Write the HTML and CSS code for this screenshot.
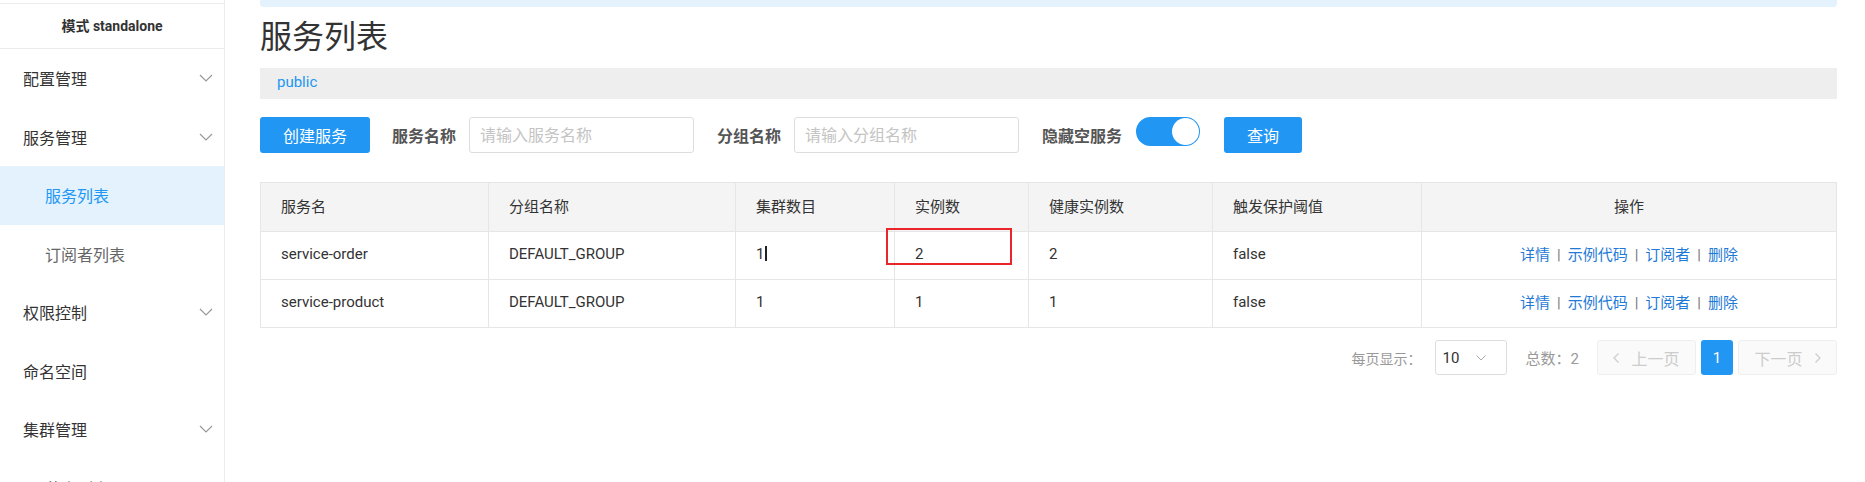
FILE: index.html
```html
<!DOCTYPE html>
<html lang="zh-CN">
<head>
<meta charset="utf-8">
<title>服务列表</title>
<link rel="stylesheet" href="styles.css">
</head>
<body>
<div class="app">
  <aside class="sidebar">
    <div class="side-head">模式 standalone</div>
    <ul class="menu">
      <li class="menu-item"><span>配置管理</span><svg class="chev" viewBox="0 0 14 8" width="14" height="8"><path d="M1 1l6 6 6-6" fill="none" stroke="#999" stroke-width="1.2"/></svg></li>
      <li class="menu-item"><span>服务管理</span><svg class="chev" viewBox="0 0 14 8" width="14" height="8"><path d="M1 1l6 6 6-6" fill="none" stroke="#999" stroke-width="1.2"/></svg></li>
      <li class="sub-item active">服务列表</li>
      <li class="sub-item">订阅者列表</li>
      <li class="menu-item"><span>权限控制</span><svg class="chev" viewBox="0 0 14 8" width="14" height="8"><path d="M1 1l6 6 6-6" fill="none" stroke="#999" stroke-width="1.2"/></svg></li>
      <li class="menu-item"><span>命名空间</span></li>
      <li class="menu-item"><span>集群管理</span><svg class="chev" viewBox="0 0 14 8" width="14" height="8"><path d="M1 1l6 6 6-6" fill="none" stroke="#999" stroke-width="1.2"/></svg></li>
      <li class="sub-item">节点列表</li>
    </ul>
  </aside>
  <main class="main">
    <div class="notice"></div>
    <h1 class="title">服务列表</h1>
    <div class="ns-bar"><span class="ns">public</span></div>
    <div class="toolbar">
      <button class="btn btn-create">创建服务</button>
      <span class="label label-first">服务名称</span>
      <input class="input" type="text" placeholder="请输入服务名称">
      <span class="label">分组名称</span>
      <input class="input" type="text" placeholder="请输入分组名称">
      <span class="label">隐藏空服务</span>
      <span class="switch"><span class="knob"></span></span>
      <button class="btn btn-query">查询</button>
    </div>
    <div class="table-wrap">
      <table class="grid">
        <colgroup>
          <col class="c1"><col class="c2"><col class="c3"><col class="c4"><col class="c5"><col class="c6"><col class="c7">
        </colgroup>
        <thead>
          <tr>
            <th>服务名</th><th>分组名称</th><th>集群数目</th><th>实例数</th><th>健康实例数</th><th>触发保护阈值</th><th class="ops">操作</th>
          </tr>
        </thead>
        <tbody>
          <tr>
            <td>service-order</td><td>DEFAULT_GROUP</td><td>1<span class="caret"></span></td><td>2</td><td>2</td><td>false</td>
            <td class="ops"><a class="lnk">详情</a><span class="sep">|</span><a class="lnk">示例代码</a><span class="sep">|</span><a class="lnk">订阅者</a><span class="sep">|</span><a class="lnk">删除</a></td>
          </tr>
          <tr>
            <td>service-product</td><td>DEFAULT_GROUP</td><td>1</td><td>1</td><td>1</td><td>false</td>
            <td class="ops"><a class="lnk">详情</a><span class="sep">|</span><a class="lnk">示例代码</a><span class="sep">|</span><a class="lnk">订阅者</a><span class="sep">|</span><a class="lnk">删除</a></td>
          </tr>
        </tbody>
      </table>
      <div class="mark"></div>
    </div>
    <div class="pager">
      <span class="pg-text">每页显示：</span>
      <span class="pg-select"><span>10</span><svg viewBox="0 0 10 6" width="10" height="6"><path d="M0.5 0.5l4.5 4.5 4.5-4.5" fill="none" stroke="#aaa" stroke-width="1"/></svg></span>
      <span class="pg-text pg-total">总数：2</span>
      <span class="pg-btn pg-prev"><svg viewBox="0 0 6 10" width="6" height="10"><path d="M5.5 0.5l-4.5 4.5 4.5 4.5" fill="none" stroke="#ccc" stroke-width="1.2"/></svg><span>上一页</span></span>
      <span class="pg-num">1</span>
      <span class="pg-btn pg-next"><span>下一页</span><svg viewBox="0 0 6 10" width="6" height="10"><path d="M0.5 0.5l4.5 4.5-4.5 4.5" fill="none" stroke="#ccc" stroke-width="1.2"/></svg></span>
    </div>
  </main>
</div>
</body>
</html>
```
FILE: styles.css
```css
* { box-sizing: border-box; }
html, body {
  margin: 0;
  padding: 0;
  background: #fff;
  overflow: hidden;
}
body {
  font-family: Roboto, "Noto Sans CJK SC", sans-serif;
  color: #333;
  width: 1865px;
  height: 482px;
}
.app {
  display: flex;
  height: 482px;
}
.sidebar {
  width: 225px;
  flex: none;
  border-right: 1px solid #ececec;
  padding-top: 3px;
  overflow: hidden;
}
.side-head {
  height: 46px;
  border-top: 1px solid #ececec;
  border-bottom: 1px solid #ececec;
  display: flex;
  align-items: center;
  justify-content: center;
  padding-bottom: 2px;
  font-size: 14px;
  font-weight: 700;
  color: #333;
}
.menu {
  list-style: none;
  margin: 0;
  padding: 0;
}
.menu-item, .sub-item {
  height: 58.5px;
  display: flex;
  align-items: center;
  font-size: 16px;
}
.menu-item {
  justify-content: space-between;
  padding: 0 11px 0 23px;
  color: #333;
}
.sub-item {
  padding-left: 45px;
  color: #666;
}
.sub-item.active {
  background: #e3f2fd;
  color: #2196f3;
}
.chev { display: block; }
.main {
  flex: 1;
  padding: 0 29px 0 35px;
}
.notice {
  height: 7px;
  background: #e3f2fd;
  border-radius: 0 0 4px 4px;
}
.title {
  margin: 0;
  height: 61px;
  line-height: 61px;
  font-size: 32px;
  font-weight: 400;
  color: #333;
}
.ns-bar {
  height: 31px;
  line-height: 28px;
  background: #eee;
  padding-left: 17px;
}
.ns {
  font-size: 15px;
  color: #2196f3;
}
.toolbar {
  margin-top: 18px;
  height: 36px;
  display: flex;
  align-items: center;
}
.btn {
  height: 36px;
  border: none;
  border-radius: 3px;
  background: #2196f3;
  color: #fff;
  font-family: Roboto, "Noto Sans CJK SC", sans-serif;
  font-size: 16px;
  padding: 0;
}
.btn-create { width: 110px; }
.btn-query { width: 78px; margin-left: 24px; }
.label {
  font-size: 16px;
  font-weight: 700;
  color: #555;
  margin: 0 13px 0 23px;
}
.label-first { margin-left: 22px; }
.input {
  width: 225px;
  height: 36px;
  border: 1px solid #ddd;
  border-radius: 3px;
  padding: 0 10px;
  font-family: Roboto, "Noto Sans CJK SC", sans-serif;
  font-size: 16px;
  color: #333;
  outline: none;
}
.input::placeholder { color: #c4c4c4; }
.switch {
  align-self: flex-start;
  margin-left: 1px;
  width: 64px;
  height: 29px;
  border-radius: 15px;
  background: #2196f3;
  display: flex;
  align-items: center;
  justify-content: flex-end;
  padding-right: 1px;
}
.knob {
  width: 27px;
  height: 27px;
  border-radius: 50%;
  background: #fff;
}
.table-wrap {
  position: relative;
  margin-top: 29px;
}
.grid {
  width: 100%;
  table-layout: fixed;
  border-collapse: collapse;
  border: 1px solid #e6e6e6;
  font-size: 15px;
}
.c1 { width: 228px; }
.c2 { width: 247px; }
.c3 { width: 159px; }
.c4 { width: 134px; }
.c5 { width: 184px; }
.c6 { width: 209px; }
.c7 { width: 415px; }
.grid th, .grid td {
  border: 1px solid #e6e6e6;
  padding: 0 0 4px 20px;
  text-align: left;
  white-space: nowrap;
}
.grid th {
  height: 49px;
  background: #f4f4f4;
  font-weight: 400;
  color: #333;
}
.grid td {
  height: 48px;
  color: #333;
}
.grid .ops {
  text-align: center;
  padding: 0 0 4px 0;
}
.lnk { color: #1f7ad6; }
.sep {
  color: #777;
  padding: 0 7px;
}
.caret {
  display: inline-block;
  width: 2px;
  height: 15px;
  background: #222;
  vertical-align: -2px;
  margin-left: 1px;
}
.mark {
  position: absolute;
  left: 626px;
  top: 46px;
  width: 126px;
  height: 37px;
  border: 2px solid #e8262b;
}
.pager {
  margin-top: 12px;
  height: 35px;
  display: flex;
  justify-content: flex-end;
  align-items: center;
}
.pg-text {
  font-size: 14px;
  color: #999;
}
.pg-total { margin-left: 19px; font-size: 15px; }
.pg-select {
  margin-left: 13px;
  width: 72px;
  height: 35px;
  border: 1px solid #ddd;
  border-radius: 3px;
  display: flex;
  align-items: center;
  padding: 0 20px 0 7px;
  justify-content: space-between;
  font-size: 15px;
  color: #333;
}
.pg-btn {
  width: 99px;
  height: 35px;
  background: #fafafa;
  border: 1px solid #eee;
  border-radius: 3px;
  display: flex;
  align-items: center;
  justify-content: center;
  gap: 12px;
  font-size: 16px;
  color: #ccc;
}
.pg-prev { margin-left: 18px; }
.pg-next { margin-left: 5px; }
.pg-num {
  margin-left: 5px;
  width: 32px;
  height: 35px;
  background: #2196f3;
  border-radius: 3px;
  color: #fff;
  font-size: 15px;
  display: flex;
  align-items: center;
  justify-content: center;
}
```
